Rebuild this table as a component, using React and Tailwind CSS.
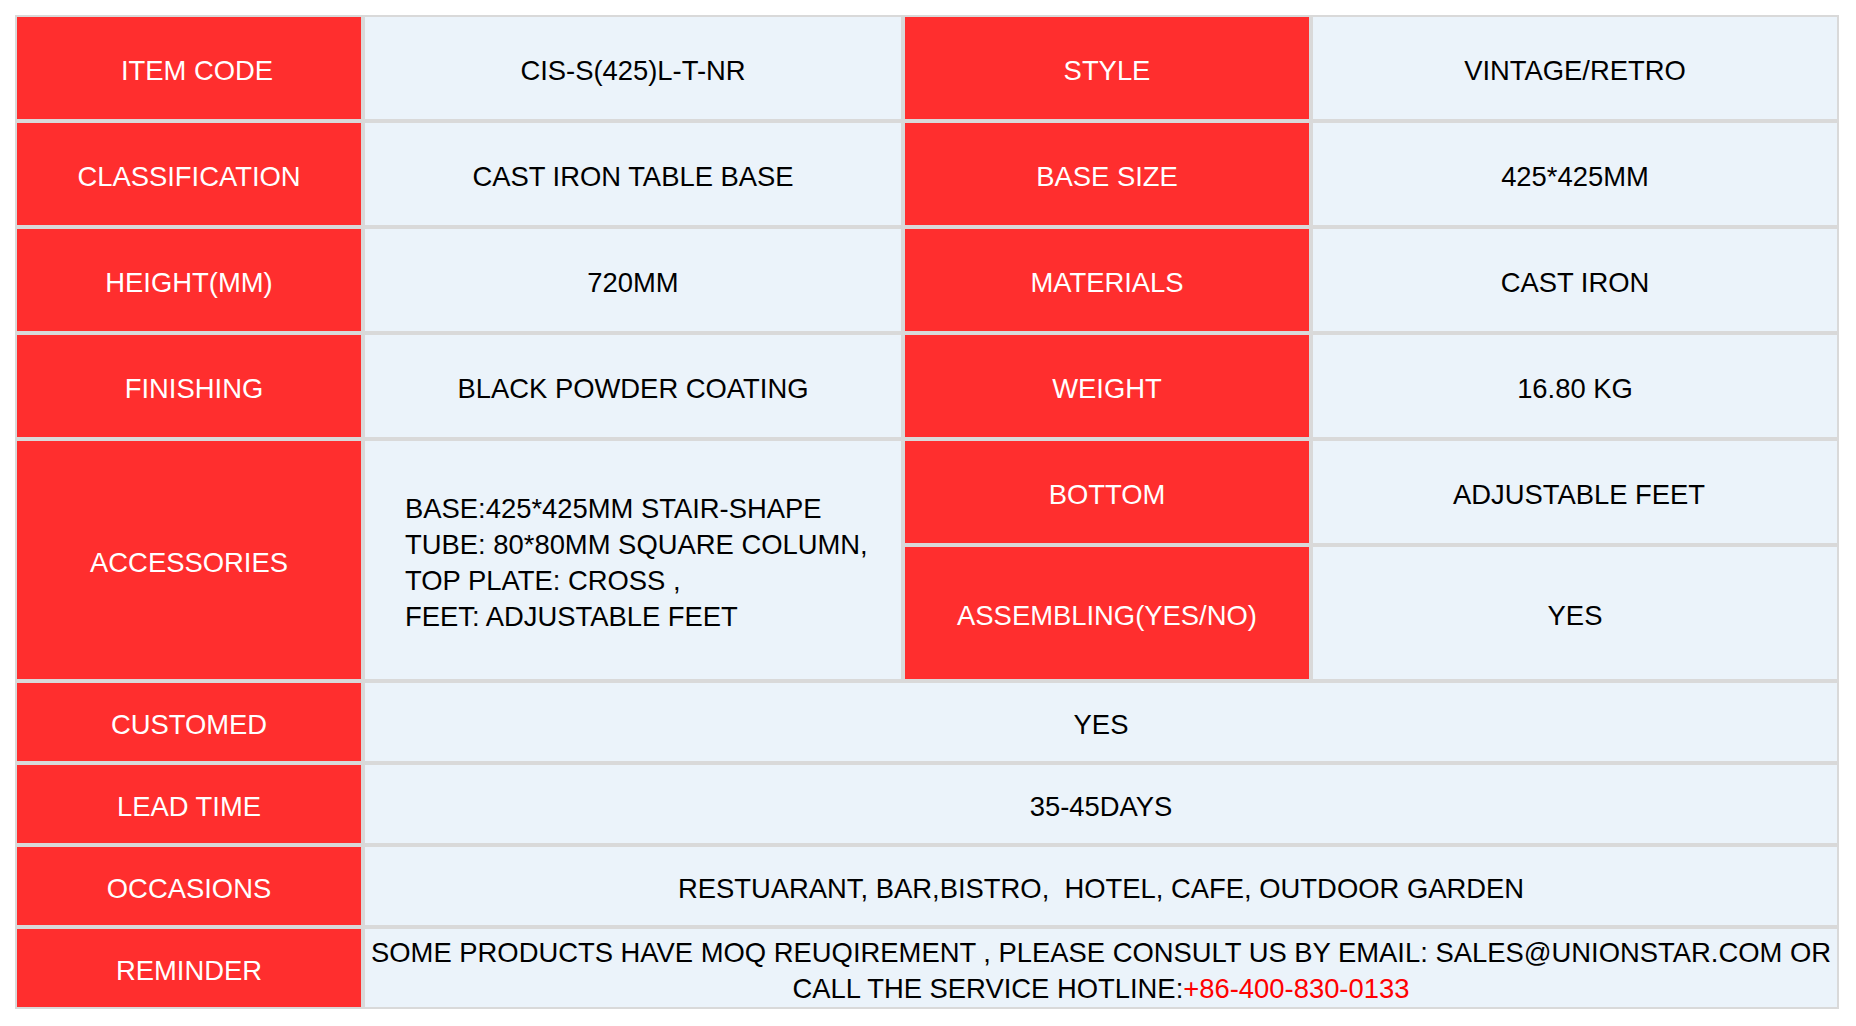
export default function App() {
  const red = "bg-[#ff2e2e] text-white";
  const light = "bg-[#ebf3fa] text-black";
  const cell = "flex items-center justify-center text-center pt-[5px]";
  return (
    <div className="min-h-screen bg-white p-[15px]" style={{ fontFamily: '"Liberation Sans", Arial, sans-serif' }}>
      <div className="grid w-[1824px] bg-[#d9d9d9] p-[2px] gap-[4px] text-[27.4px] leading-[36px] grid-cols-[344px_536px_404px_524px] grid-rows-[102px_102px_102px_102px_102px_132px_78px_78px_78px_78px]">
        <div className={`${cell} ${red} pl-[16px]`}>ITEM CODE</div>
        <div className={`${cell} ${light}`}>CIS-S(425)L-T-NR</div>
        <div className={`${cell} ${red}`}>STYLE</div>
        <div className={`${cell} ${light}`}>VINTAGE/RETRO</div>

        <div className={`${cell} ${red}`}>CLASSIFICATION</div>
        <div className={`${cell} ${light}`}>CAST IRON TABLE BASE</div>
        <div className={`${cell} ${red}`}>BASE SIZE</div>
        <div className={`${cell} ${light}`}>425*425MM</div>

        <div className={`${cell} ${red}`}>HEIGHT(MM)</div>
        <div className={`${cell} ${light}`}>720MM</div>
        <div className={`${cell} ${red}`}>MATERIALS</div>
        <div className={`${cell} ${light}`}>CAST IRON</div>

        <div className={`${cell} ${red} pl-[10px]`}>FINISHING</div>
        <div className={`${cell} ${light}`}>BLACK POWDER COATING</div>
        <div className={`${cell} ${red}`}>WEIGHT</div>
        <div className={`${cell} ${light}`}>16.80 KG</div>

        <div className={`${cell} ${red} row-span-2`}>ACCESSORIES</div>
        <div className={`flex flex-col justify-center pl-[40px] pt-[5px] text-left row-span-2 ${light}`}>
          <div>BASE:425*425MM STAIR-SHAPE</div>
          <div>TUBE: 80*80MM SQUARE COLUMN,</div>
          <div>TOP PLATE: CROSS ,</div>
          <div>FEET: ADJUSTABLE FEET</div>
        </div>
        <div className={`${cell} ${red}`}>BOTTOM</div>
        <div className={`${cell} ${light} pl-[8px]`}>ADJUSTABLE FEET</div>
        <div className={`${cell} ${red}`}>ASSEMBLING(YES/NO)</div>
        <div className={`${cell} ${light}`}>YES</div>

        <div className={`${cell} ${red}`}>CUSTOMED</div>
        <div className={`${cell} ${light} col-span-3`}>YES</div>

        <div className={`${cell} ${red}`}>LEAD TIME</div>
        <div className={`${cell} ${light} col-span-3`}>35-45DAYS</div>

        <div className={`${cell} ${red}`}>OCCASIONS</div>
        <div className={`${cell} ${light} col-span-3 whitespace-pre`}>RESTUARANT, BAR,BISTRO,  HOTEL, CAFE, OUTDOOR GARDEN</div>

        <div className={`${cell} ${red}`}>REMINDER</div>
        <div className={`${cell} ${light} col-span-3 flex-col`}>
          <div className="whitespace-nowrap">SOME PRODUCTS HAVE MOQ REUQIREMENT , PLEASE CONSULT US BY EMAIL: SALES@UNIONSTAR.COM OR</div>
          <div className="whitespace-nowrap">CALL THE SERVICE HOTLINE:<span className="text-[#ff0000]">+86-400-830-0133</span></div>
        </div>
      </div>
    </div>
  );
}
